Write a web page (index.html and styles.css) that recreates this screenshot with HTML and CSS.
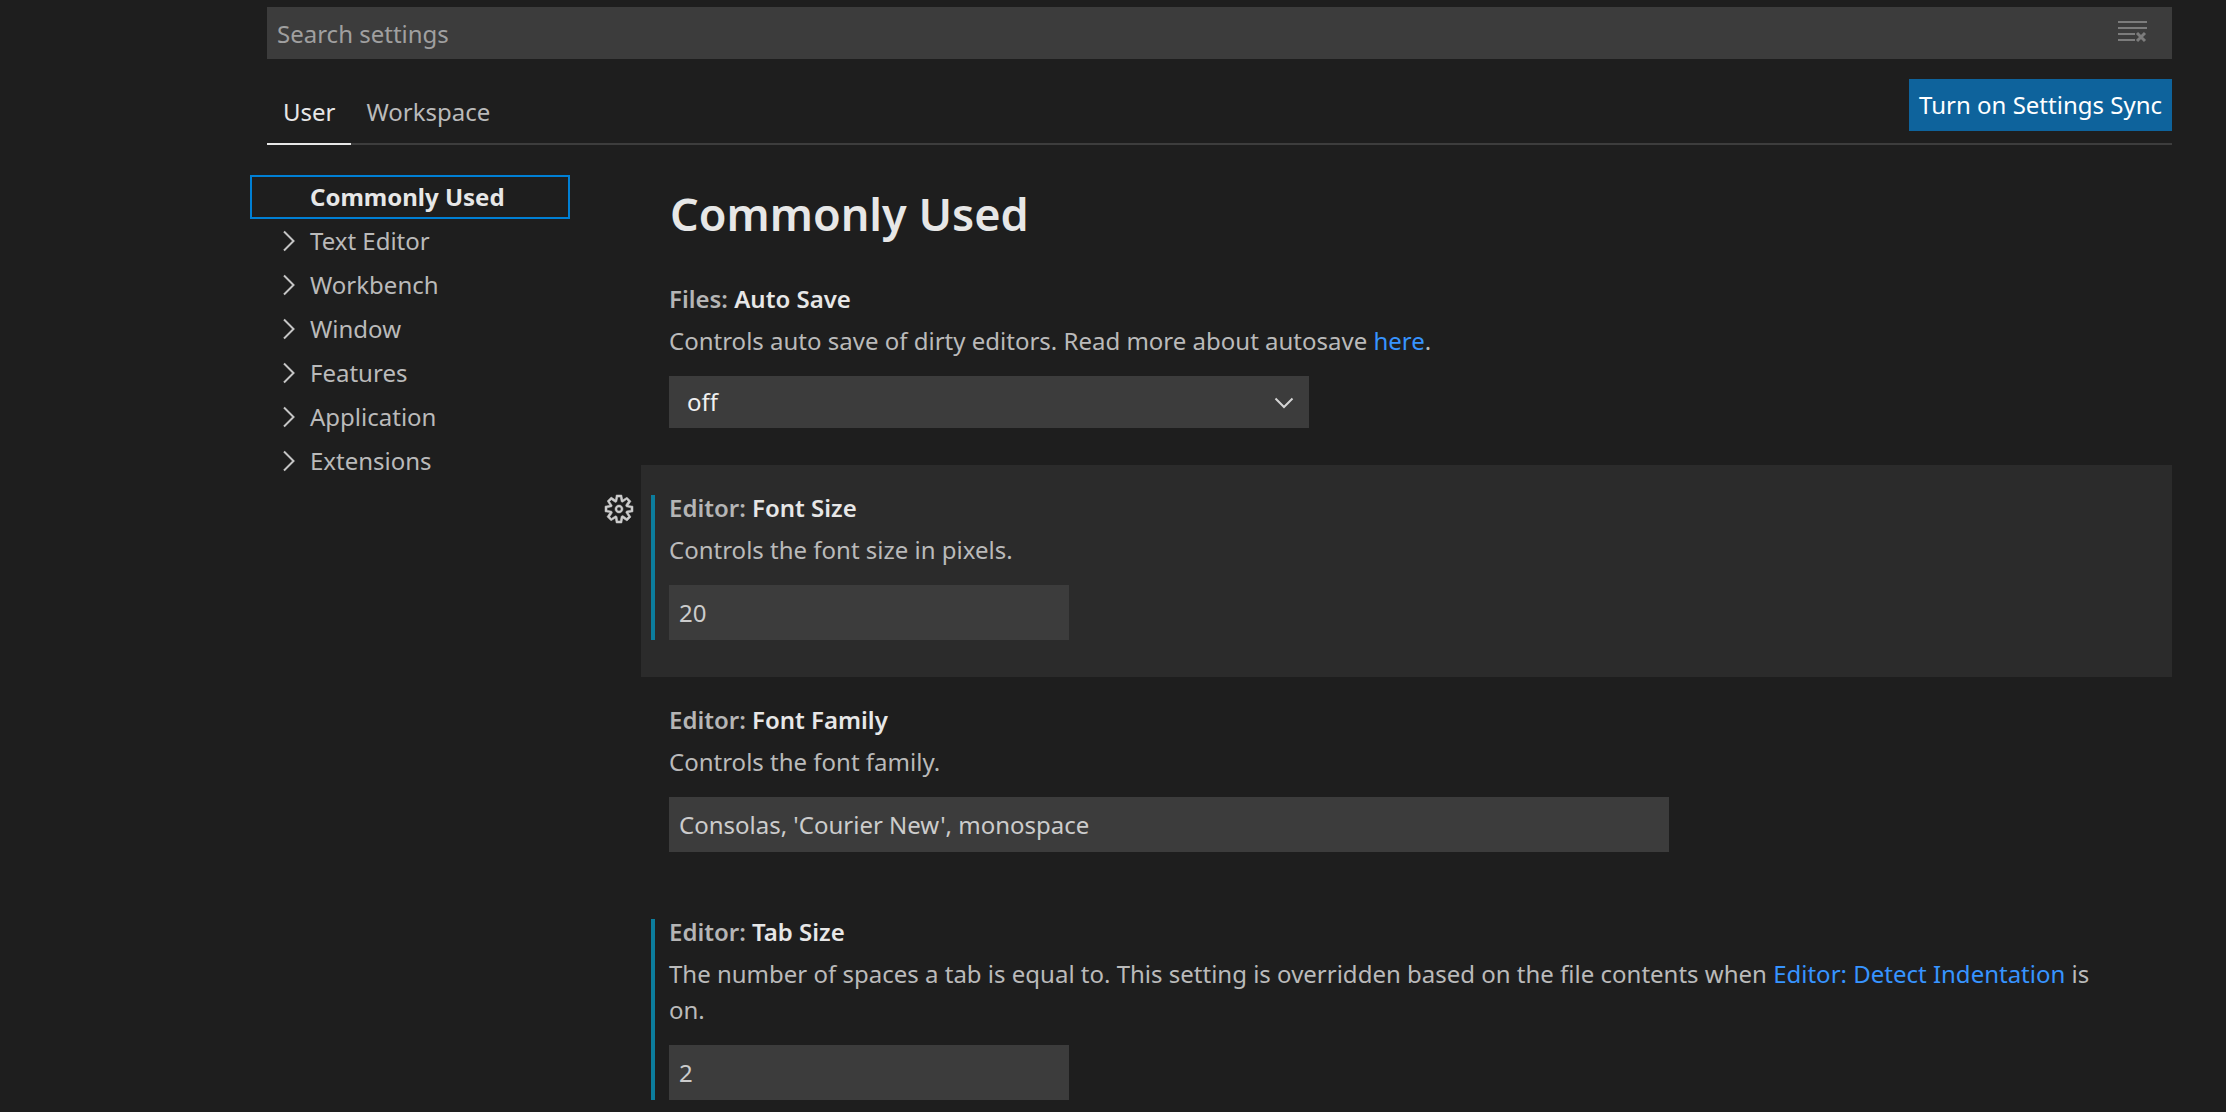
FILE: index.html
```
<!DOCTYPE html>
<html lang="en">
<head>
  <meta charset="utf-8">
  <meta name="viewport" content="width=device-width, initial-scale=1">
  <title>Settings</title>
  <link rel="stylesheet" href="styles.css">
</head>
<body>
  <div class="settings">
    <header class="header">
      <div class="search">
        <input class="search-input" type="text" placeholder="Search settings" aria-label="Search settings">
        <button class="icon-button" type="button" aria-label="Clear settings search input">
          <svg class="icon" viewBox="0 0 32 32" fill="none" stroke="currentColor" stroke-width="2">
            <path d="M2 5h29M2 11h29M2 17h17M2 23h17"/>
            <path d="M21 16l8 8M29 16l-8 8" stroke-width="3"/>
          </svg>
        </button>
      </div>
      <div class="toolbar">
        <nav class="tabs" aria-label="Settings scope">
          <button class="tab tab-active" type="button">User</button>
          <button class="tab" type="button">Workspace</button>
        </nav>
        <button class="sync" type="button">Turn on Settings Sync</button>
      </div>
    </header>

    <div class="body">
      <nav class="toc" aria-label="Settings categories">
        <a class="toc-item toc-selected" href="#commonly-used"><span class="chevron"></span>Commonly Used</a>
        <a class="toc-item" href="#text-editor"><svg class="chevron" viewBox="0 0 32 32"><path d="M12 6.500l9.500 9.500-9.500 9.500"/></svg>Text Editor</a>
        <a class="toc-item" href="#workbench"><svg class="chevron" viewBox="0 0 32 32"><path d="M12 6.500l9.500 9.500-9.500 9.500"/></svg>Workbench</a>
        <a class="toc-item" href="#window"><svg class="chevron" viewBox="0 0 32 32"><path d="M12 6.500l9.500 9.500-9.500 9.500"/></svg>Window</a>
        <a class="toc-item" href="#features"><svg class="chevron" viewBox="0 0 32 32"><path d="M12 6.500l9.500 9.500-9.500 9.500"/></svg>Features</a>
        <a class="toc-item" href="#application"><svg class="chevron" viewBox="0 0 32 32"><path d="M12 6.500l9.500 9.500-9.500 9.500"/></svg>Application</a>
        <a class="toc-item" href="#extensions"><svg class="chevron" viewBox="0 0 32 32"><path d="M12 6.500l9.500 9.500-9.500 9.500"/></svg>Extensions</a>
      </nav>

      <main class="list" id="commonly-used">
        <h1 class="group-title">Commonly Used</h1>

        <section class="setting">
          <div class="setting-box">
            <div class="setting-content">
              <label class="setting-title" for="auto-save"><span class="category">Files: </span>Auto Save</label>
              <p class="description">Controls auto save of dirty editors. Read more about autosave <a class="link" href="#autosave">here</a>.</p>
              <div class="select-wrap">
                <select class="select" id="auto-save">
                  <option>off</option>
                  <option>afterDelay</option>
                  <option>onFocusChange</option>
                  <option>onWindowChange</option>
                </select>
                <svg class="select-arrow" viewBox="0 0 20 20"><path d="M1.500 6.500L10 15l8.500-8.500"/></svg>
              </div>
            </div>
          </div>
        </section>

        <section class="setting setting-focused">
          <button class="icon-button gear" type="button" aria-label="More actions">
            <svg class="icon" viewBox="0 0 16 16" fill="currentColor" fill-rule="evenodd" stroke="currentColor" stroke-width=".25">
              <path d="M9.1 4.4L8.6 2H7.4l-.5 2.4-.7.3-2-1.3-.9.8 1.3 2-.2.7-2.4.5v1.2l2.4.5.3.8-1.3 2 .8.8 2-1.3.8.3.4 2.3h1.2l.5-2.4.8-.3 2 1.3.8-.8-1.3-2 .3-.8 2.3-.4V7.4l-2.4-.5-.3-.8 1.3-2-.8-.8-2 1.3-.7-.2zM9.4 1l.5 2.4L12 2.1l2 2-1.4 2.1 2.4.4v2.8l-2.4.5L14 12l-2 2-2.1-1.4-.5 2.4H6.6l-.5-2.4L4 13.9l-2-2 1.4-2.1L1 9.4V6.6l2.4-.5L2.1 4l2-2 2.1 1.4.4-2.400h2.8zm.6 7c0 1.1-.9 2-2 2s-2-.9-2-2 .9-2 2-2 2 .9 2 2zM8 9c.6 0 1-.4 1-1s-.4-1-1-1-1 .4-1 1 .4 1 1 1z"/>
            </svg>
          </button>
          <div class="setting-box">
            <div class="setting-content modified">
              <label class="setting-title" for="font-size"><span class="category">Editor: </span>Font Size</label>
              <p class="description">Controls the font size in pixels.</p>
              <input class="text-input number" id="font-size" type="text" inputmode="numeric" value="20">
            </div>
          </div>
        </section>

        <section class="setting">
          <div class="setting-box">
            <div class="setting-content">
              <label class="setting-title" for="font-family"><span class="category">Editor: </span>Font Family</label>
              <p class="description">Controls the font family.</p>
              <input class="text-input" id="font-family" type="text" value="Consolas, 'Courier New', monospace">
            </div>
          </div>
        </section>

        <section class="setting">
          <div class="setting-box">
            <div class="setting-content modified">
              <label class="setting-title" for="tab-size"><span class="category">Editor: </span>Tab Size</label>
              <p class="description">The number of spaces a tab is equal to. This setting is overridden based on the file contents when <a class="link" href="#detect-indentation">Editor: Detect Indentation</a> is on.</p>
              <input class="text-input number" id="tab-size" type="text" inputmode="numeric" value="2">
            </div>
          </div>
        </section>
      </main>
    </div>
  </div>
</body>
</html>
```
FILE: styles.css
```
* {
  box-sizing: border-box;
}

body {
  margin: 0;
  background: #1e1e1e;
  color: #bababa;
  font: 24px/36px "Noto Sans", "Open Sans", sans-serif;
}

button,
input,
select {
  font: inherit;
  color: inherit;
  border: 0;
  border-radius: 0;
  margin: 0;
}

button {
  cursor: pointer;
}

.settings {
  display: flex;
  flex-direction: column;
  height: 100vh;
  padding: 7px 54px 0 250px;
}

.header {
  display: flex;
  flex-direction: column;
  gap: 20px;
  margin-left: 17px;
}

.search {
  display: flex;
  align-items: center;
  height: 52px;
  padding-right: 24px;
  background: #3c3c3c;
}

.search-input {
  flex: 1;
  min-width: 0;
  height: 100%;
  padding: 0 10px;
  background: none;
  color: #ccc;
}

.search-input::placeholder {
  color: #a0a0a0;
  opacity: 1;
}

.icon-button {
  width: 32px;
  height: 32px;
  padding: 0;
  background: none;
  color: #7c7c7c;
}

.icon {
  display: block;
  width: 32px;
  height: 32px;
}

.toolbar {
  display: flex;
  justify-content: space-between;
  align-items: flex-start;
  border-bottom: 2px solid #3d3d3d;
}

.tabs {
  display: flex;
  height: 66px;
  margin-bottom: -2px;
}

.tab {
  padding: 2px 15px 0 16px;
  background: none;
  border-bottom: 2px solid transparent;
}

.tab-active {
  color: #e7e7e7;
  border-bottom-color: #e7e7e7;
}

.sync {
  height: 52px;
  padding: 0 10px;
  background: #0e639c;
  color: #fff;
}

.body {
  display: flex;
  flex: 1;
  min-height: 0;
  gap: 33px;
}

.toc {
  flex: 0 0 320px;
  padding-top: 30px;
}

.toc-item {
  display: flex;
  align-items: center;
  gap: 6px;
  height: 44px;
  padding-left: 20px;
  border: 2px solid transparent;
  color: inherit;
  text-decoration: none;
}

.toc-selected {
  border-color: #007fd4;
  color: #e7e7e7;
  font-weight: 700;
}

.chevron {
  width: 32px;
  height: 32px;
  fill: none;
  stroke: #c5c5c5;
  stroke-width: 2;
}

.list {
  flex: 1;
  min-width: 0;
  padding-top: 38px;
  overflow-y: auto;
  scrollbar-width: none;
}

.group-title {
  margin: 0 0 12px 67px;
  color: #e7e7e7;
  font-size: 45px;
  line-height: 61px;
  font-weight: 600;
}

.setting {
  display: grid;
  grid-template-columns: 32px 1fr;
  column-gap: 6px;
}

.gear {
  margin-top: 28px;
  color: #ccc;
}

.setting-box {
  grid-column: 2;
  padding: 30px 52px 37px 10px;
}

.setting-focused .setting-box {
  background: #2b2b2b;
}

.setting-content {
  padding-left: 14px;
  border-left: 4px solid transparent;
}

.modified {
  border-left-color: #0c7d9d;
}

.setting-title {
  display: block;
  margin-bottom: 11px;
  color: #e7e7e7;
  line-height: 26px;
  font-weight: 600;
}

.category {
  color: #b5b5b5;
}

.description {
  margin: 0 0 17px;
}

.link {
  color: #3794ff;
  text-decoration: none;
}

.select-wrap {
  display: grid;
  align-items: center;
  max-width: 640px;
}

.select {
  grid-area: 1 / 1;
  height: 52px;
  padding: 0 50px 0 18px;
  appearance: none;
  background: #3c3c3c;
  color: #f0f0f0;
}

.select-arrow {
  grid-area: 1 / 1;
  justify-self: end;
  width: 20px;
  height: 20px;
  margin-right: 15px;
  fill: none;
  stroke: #d4d4d4;
  stroke-width: 2;
  pointer-events: none;
}

.text-input {
  display: block;
  width: 100%;
  max-width: 1000px;
  height: 55px;
  padding: 0 10px;
  background: #3c3c3c;
  color: #ccc;
}

.number {
  max-width: 400px;
}
```
